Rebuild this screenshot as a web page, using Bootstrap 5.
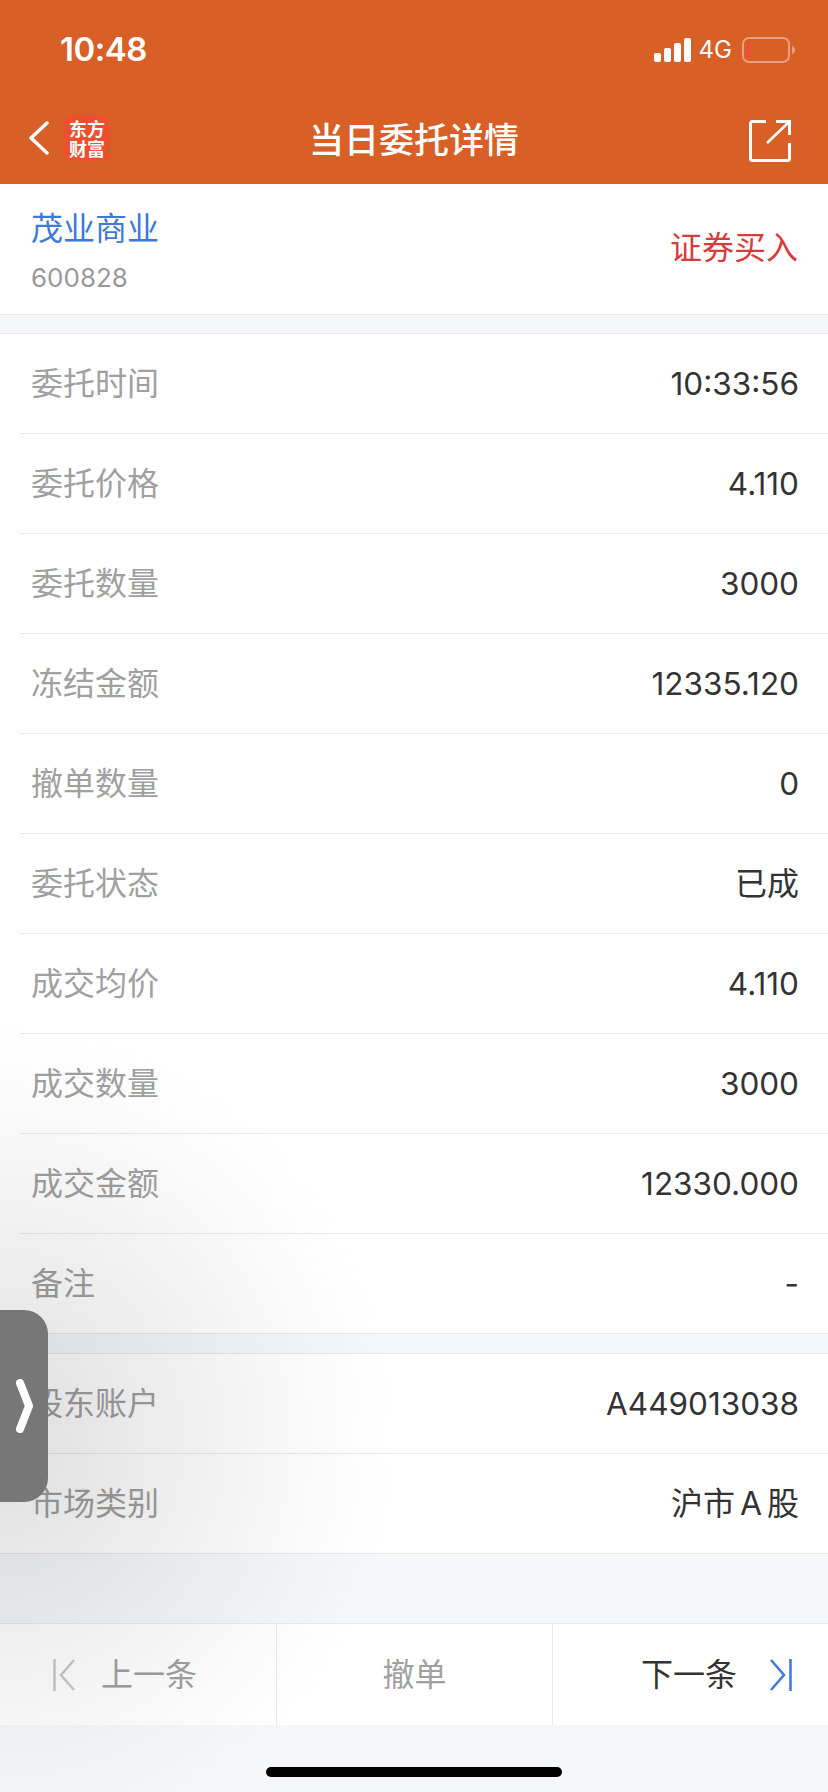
<!DOCTYPE html>
<html lang="zh-CN">
<head>
    <meta charset="UTF-8">
    <meta name="viewport" content="width=device-width, initial-scale=1.0">
    <title>当日委托详情</title>
    <link href="https://cdn.jsdelivr.net/npm/bootstrap@5.3.0/dist/css/bootstrap.min.css" rel="stylesheet">
    <style>
        body {
            font-family: Inter, "Noto Sans CJK SC", sans-serif;
            background-color: #f6f7f9;
            color: #333;
        }

        .phone-screen {
            position: relative;
            width: 828px;
            height: 1792px;
            overflow: hidden;
            background-color: #f6f7f9;
        }

        /* Header */
        .app-header {
            background-color: #d86027;
            height: 184px;
            color: #fff;
        }

        .status-row {
            height: 88px;
            padding: 29px 33px 0 60px;
        }

        .status-time {
            font-size: 33px;
            font-weight: 600;
            letter-spacing: -0.5px;
            line-height: 40px;
        }

        .status-net {
            font-size: 24px;
            line-height: 30px;
            margin: 0 10px 0 8px;
        }

        .status-icons {
            margin-top: 6px;
        }

        .title-row {
            height: 96px;
            padding: 4px 37px 0 29px;
        }

        .brand-logo {
            width: 46px;
            height: 46px;
            margin-left: 15px;
            padding-top: 3px;
            border-radius: 8px;
            background-color: #ee4f2e;
            font-family: "Noto Sans CJK SC", sans-serif;
            font-size: 18px;
            font-weight: 700;
            line-height: 20px;
            text-align: center;
        }

        .page-title {
            font-family: "Noto Sans CJK SC", sans-serif;
            font-size: 35px;
            font-weight: 500;
            line-height: 48px;
        }

        .share-icon {
            margin-top: 6px;
        }

        /* Stock head */
        .stock-head {
            height: 131px;
            padding: 0 30px 0 31px;
            background-color: #fff;
            border-bottom: 1px solid #e8e9eb;
            margin-bottom: 18px;
        }

        .stock-name {
            color: #3c79d9;
            font-size: 32px;
            line-height: 44px;
            margin-top: 23px;
        }

        .stock-code {
            color: #999;
            font-size: 26px;
            line-height: 34px;
            margin-top: 10px;
        }

        .trade-side {
            color: #d93a3a;
            font-size: 32px;
            margin-top: -2px;
        }

        /* Detail rows */
        .detail-block {
            background-color: #fff;
            border-top: 1px solid #e8e9eb;
            border-bottom: 1px solid #e8e9eb;
            padding-left: 20px;
        }

        .detail-block + .detail-block {
            margin-top: 19px;
        }

        .detail-row {
            height: 100px;
            padding: 0 29px 0 11px;
            font-size: 31.5px;
            border-bottom: 1px solid #e8e9eb;
        }

        .detail-row:last-child {
            border-bottom: 0;
            height: 99px;
        }

        .row-label {
            color: #a0a0a0;
            font-size: 32px;
        }

        .value-cjk {
            font-size: 32px;
        }

        .value-spaced {
            word-spacing: -4px;
        }

        /* Bottom toolbar */
        .bottom-bar {
            height: 102px;
            margin-top: 69px;
            background-color: #fff;
            border-top: 1px solid #e8e9eb;
            font-size: 32px;
        }

        .bar-cell {
            flex: 0 0 276px;
            height: 100%;
        }

        .bar-cell + .bar-cell {
            border-left: 1px solid #e8e9eb;
        }

        .bar-prev {
            color: #a0a0a0;
            padding-left: 53px;
            gap: 26px;
        }

        .bar-cancel {
            color: #a0a0a0;
        }

        .bar-next {
            color: #333;
            padding-right: 36px;
            gap: 33px;
        }

        .home-bar {
            width: 296px;
            height: 10px;
            margin: 42px auto 0;
            border-radius: 5px;
            background-color: #000;
        }

        /* Floating side handle and its shadow */
        .edge-shade {
            position: absolute;
            left: 0;
            top: 900px;
            width: 460px;
            height: 892px;
            pointer-events: none;
            background: radial-gradient(ellipse 400px 420px at 0 540px, rgba(0, 0, 0, 0.13), rgba(0, 0, 0, 0.06) 50%, rgba(0, 0, 0, 0.02) 80%, rgba(0, 0, 0, 0) 100%);
        }

        .side-handle {
            position: absolute;
            left: 0;
            top: 1310px;
            width: 48px;
            height: 192px;
            border-radius: 0 24px 24px 0;
            background-color: #777;
        }
    </style>
</head>
<body>
    <div class="phone-screen">
        <header class="app-header">
            <div class="status-row d-flex justify-content-between align-items-start">
                <span class="status-time">10:48</span>
                <div class="status-icons d-flex align-items-center">
                    <svg width="37" height="24" viewBox="0 0 37 24" fill="#fff">
                        <rect x="0" y="15" width="7" height="9" rx="2"/>
                        <rect x="10" y="10" width="7" height="14" rx="2"/>
                        <rect x="20" y="5" width="7" height="19" rx="2"/>
                        <rect x="30" y="0" width="7" height="24" rx="2"/>
                    </svg>
                    <span class="status-net">4G</span>
                    <svg width="53" height="26" viewBox="0 0 53 26" fill="none">
                        <rect x="1" y="1" width="46" height="24" rx="6" stroke="#fff" stroke-opacity="0.4" stroke-width="2"/>
                        <rect x="5" y="5" width="3" height="16" fill="#ef4a3c"/>
                        <path d="M50 9c2 .5 3 2 3 4s-1 3.500-3 4z" fill="#fff" fill-opacity="0.4"/>
                    </svg>
                </div>
            </div>
            <div class="title-row d-flex align-items-center position-relative">
                <svg width="20" height="34" viewBox="0 0 20 34" fill="none" stroke="#fff" stroke-width="3.500" stroke-linecap="round" stroke-linejoin="round">
                    <path d="M18 2 2 17l16 15"/>
                </svg>
                <div class="brand-logo">东方<br>财富</div>
                <div class="page-title position-absolute start-50 translate-middle-x">当日委托详情</div>
                <svg class="share-icon ms-auto" width="42" height="42" viewBox="0 0 42 42" fill="none" stroke="#fff" stroke-width="3">
                    <path d="M17 1.500H3.500a2 2 0 0 0-2 2v35a2 2 0 0 0 2 2h35a2 2 0 0 0 2-2V23"/>
                    <path d="M27 1.500h13.500V15" />
                    <path d="M40 2 18 23" stroke-width="2.500"/>
                </svg>
            </div>
        </header>

        <section class="stock-head d-flex justify-content-between align-items-center">
            <div class="align-self-start">
                <div class="stock-name">茂业商业</div>
                <div class="stock-code">600828</div>
            </div>
            <div class="trade-side">证券买入</div>
        </section>

        <section class="detail-block">
            <div class="detail-row d-flex justify-content-between align-items-center"><span class="row-label">委托时间</span><span>10:33:56</span></div>
            <div class="detail-row d-flex justify-content-between align-items-center"><span class="row-label">委托价格</span><span>4.110</span></div>
            <div class="detail-row d-flex justify-content-between align-items-center"><span class="row-label">委托数量</span><span>3000</span></div>
            <div class="detail-row d-flex justify-content-between align-items-center"><span class="row-label">冻结金额</span><span>12335.120</span></div>
            <div class="detail-row d-flex justify-content-between align-items-center"><span class="row-label">撤单数量</span><span>0</span></div>
            <div class="detail-row d-flex justify-content-between align-items-center"><span class="row-label">委托状态</span><span class="value-cjk">已成</span></div>
            <div class="detail-row d-flex justify-content-between align-items-center"><span class="row-label">成交均价</span><span>4.110</span></div>
            <div class="detail-row d-flex justify-content-between align-items-center"><span class="row-label">成交数量</span><span>3000</span></div>
            <div class="detail-row d-flex justify-content-between align-items-center"><span class="row-label">成交金额</span><span>12330.000</span></div>
            <div class="detail-row d-flex justify-content-between align-items-center"><span class="row-label">备注</span><span>-</span></div>
        </section>

        <section class="detail-block">
            <div class="detail-row d-flex justify-content-between align-items-center"><span class="row-label">股东账户</span><span>A449013038</span></div>
            <div class="detail-row d-flex justify-content-between align-items-center"><span class="row-label">市场类别</span><span class="value-cjk value-spaced">沪市 A 股</span></div>
        </section>

        <nav class="bottom-bar d-flex">
            <div class="bar-cell bar-prev d-flex align-items-center">
                <svg width="22" height="32" viewBox="0 0 22 32" fill="none" stroke="#c8c8c8" stroke-width="2.500">
                    <path d="M1.500 0v32M21 1 8 16l13 15"/>
                </svg>
                <span>上一条</span>
            </div>
            <div class="bar-cell bar-cancel d-flex align-items-center justify-content-center">撤单</div>
            <div class="bar-cell bar-next d-flex align-items-center justify-content-end">
                <span>下一条</span>
                <svg width="22" height="32" viewBox="0 0 22 32" fill="none" stroke="#3c79d9" stroke-width="2.500">
                    <path d="M20.500 0v32M1 1l13 15L1 31"/>
                </svg>
            </div>
        </nav>

        <div class="home-bar"></div>

        <div class="edge-shade"></div>
        <div class="side-handle d-flex align-items-center">
            <svg class="ms-3" width="17" height="54" viewBox="0 0 17 54" fill="none" stroke="#fff" stroke-width="8" stroke-linecap="round" stroke-linejoin="round">
                <path d="M4 4l9 23-9 23"/>
            </svg>
        </div>
    </div>

    <script src="https://cdn.jsdelivr.net/npm/bootstrap@5.3.0/dist/js/bootstrap.bundle.min.js"></script>
</body>
</html>
